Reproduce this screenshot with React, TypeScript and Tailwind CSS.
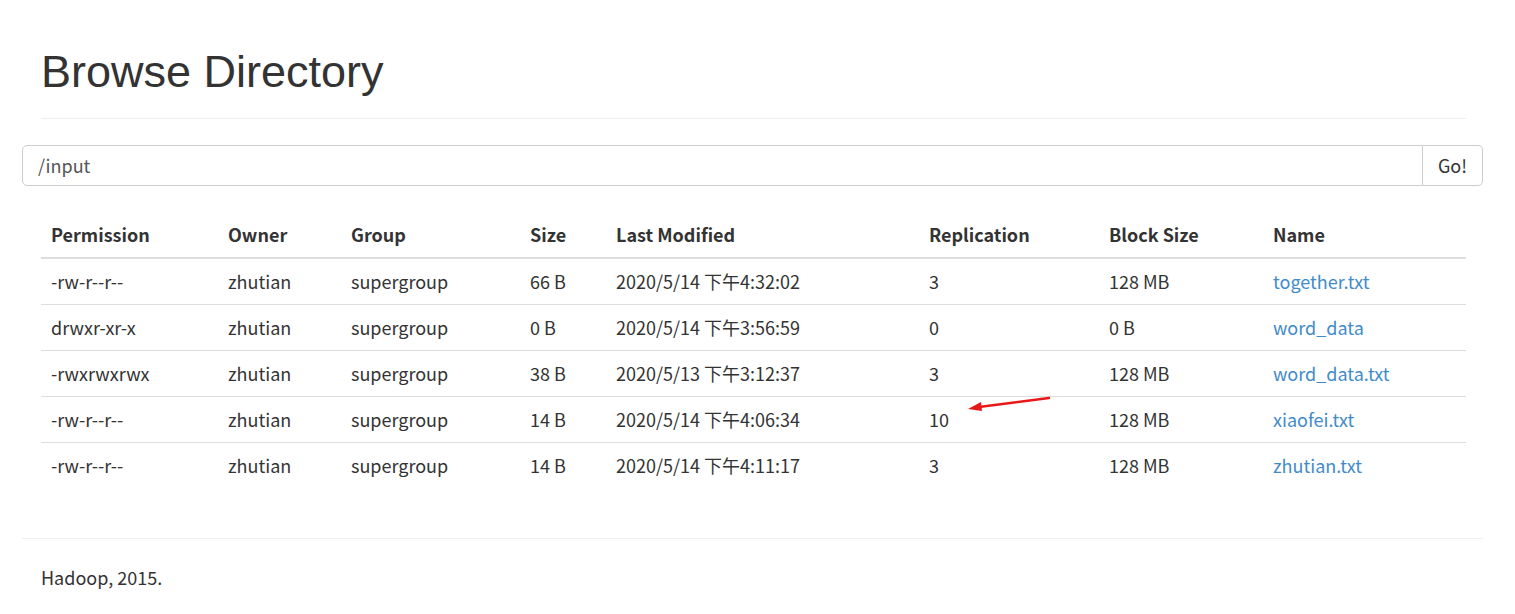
import React from "react";

interface Entry {
  permission: string;
  owner: string;
  group: string;
  size: string;
  modified: string;
  replication: string;
  blockSize: string;
  name: string;
}

const rows: Entry[] = [
  { permission: "-rw-r--r--", owner: "zhutian", group: "supergroup", size: "66 B", modified: "2020/5/14 下午4:32:02", replication: "3", blockSize: "128 MB", name: "together.txt" },
  { permission: "drwxr-xr-x", owner: "zhutian", group: "supergroup", size: "0 B", modified: "2020/5/14 下午3:56:59", replication: "0", blockSize: "0 B", name: "word_data" },
  { permission: "-rwxrwxrwx", owner: "zhutian", group: "supergroup", size: "38 B", modified: "2020/5/13 下午3:12:37", replication: "3", blockSize: "128 MB", name: "word_data.txt" },
  { permission: "-rw-r--r--", owner: "zhutian", group: "supergroup", size: "14 B", modified: "2020/5/14 下午4:06:34", replication: "10", blockSize: "128 MB", name: "xiaofei.txt" },
  { permission: "-rw-r--r--", owner: "zhutian", group: "supergroup", size: "14 B", modified: "2020/5/14 下午4:11:17", replication: "3", blockSize: "128 MB", name: "zhutian.txt" },
];

const cols = [
  { label: "Permission", w: "w-[177px]" },
  { label: "Owner", w: "w-[123px]" },
  { label: "Group", w: "w-[179px]" },
  { label: "Size", w: "w-[86px]" },
  { label: "Last Modified", w: "w-[313px]" },
  { label: "Replication", w: "w-[180px]" },
  { label: "Block Size", w: "w-[164px]" },
  { label: "Name", w: "w-[203px]" },
];

const body = { fontFamily: '"Noto Sans CJK SC", "Noto Sans", sans-serif' };

export default function App() {
  return (
    <div className="min-h-[614px] bg-white text-[#333] text-[18px]" style={body}>
      <div className="ml-[22px] mr-[32px] pt-[47px]">
        {/* Header */}
        <div className="ml-[19px] mr-[17px] border-b border-[#eee] pb-[22px]">
          <h1
            className="text-[45px] leading-[49px] font-normal text-[#333]"
            style={{ fontFamily: '"Liberation Sans", Arial, sans-serif' }}
          >
            Browse Directory
          </h1>
        </div>

        {/* Path input */}
        <div className="mt-[26px] flex h-[41px]">
          <div className="flex-1 flex items-center border border-[#ccc] rounded-l-[5px] pl-[15px] text-[#555]">
            /input
          </div>
          <button className="w-[60px] border border-l-0 border-[#ccc] rounded-r-[5px] bg-white text-[#333]">
            Go!
          </button>
        </div>

        {/* Listing */}
        <div className="relative ml-[19px] mr-[17px] mt-[26px]">
          <table className="w-full border-collapse table-fixed">
            <thead>
              <tr className="h-[46px] border-b-2 border-[#ddd]">
                {cols.map(c => (
                  <th key={c.label} className={`${c.w} text-left font-bold pl-[10px]`}>
                    {c.label}
                  </th>
                ))}
              </tr>
            </thead>
            <tbody>
              {rows.map((r, i) => (
                <tr key={r.name} className={`h-[46px] ${i > 0 ? "border-t border-[#ddd]" : ""}`}>
                  <td className="pl-[10px]">{r.permission}</td>
                  <td className="pl-[10px]">{r.owner}</td>
                  <td className="pl-[10px]">{r.group}</td>
                  <td className="pl-[10px]">{r.size}</td>
                  <td className="pl-[10px]">{r.modified}</td>
                  <td className="pl-[10px]">{r.replication}</td>
                  <td className="pl-[10px]">{r.blockSize}</td>
                  <td className="pl-[10px]">
                    <a href="#" className="text-[#428bca]">{r.name}</a>
                  </td>
                </tr>
              ))}
            </tbody>
          </table>

          {/* annotation arrow */}
          <svg className="absolute left-[900px] top-[179px]" width="120" height="24" viewBox="0 0 120 24">
            <line x1="108" y1="7" x2="38" y2="16" stroke="#e81818" strokeWidth="2.5" strokeLinecap="round" />
            <polygon points="27,18 40,11 41,20" fill="#e81818" />
          </svg>
        </div>

        {/* Footer */}
        <div className="mt-[50px] border-t border-[#eee] pt-[26px] pl-[19px]">
          <p className="leading-[25px]">Hadoop, 2015.</p>
        </div>
      </div>
    </div>
  );
}
